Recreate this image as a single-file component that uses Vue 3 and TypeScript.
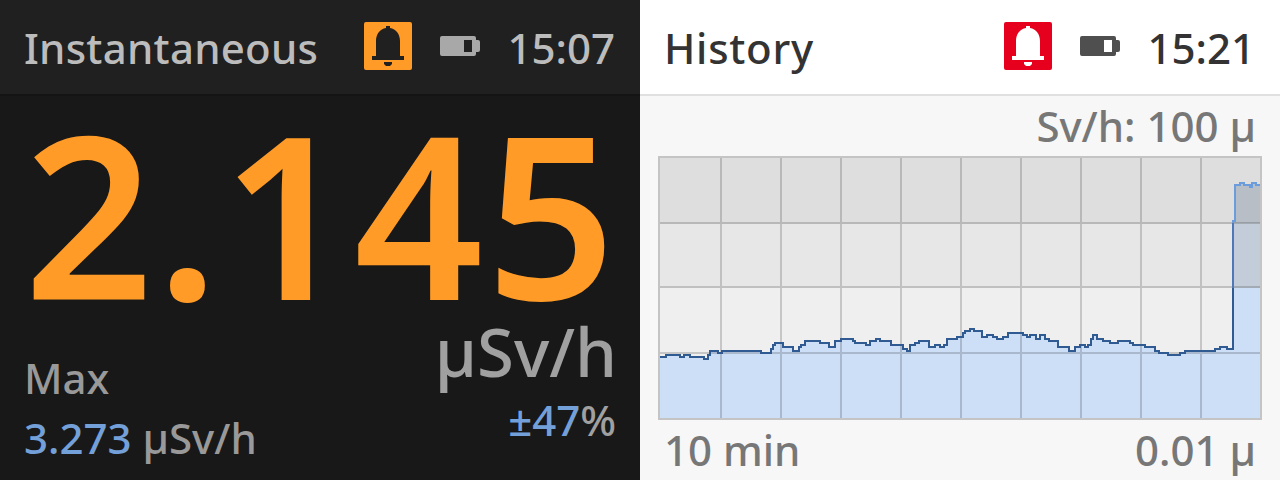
<template>
  <div class="screen">
    <section class="panel dark">
      <header class="bar">
        <span class="title title-long">Instantaneous</span>
        <span class="status">
          <svg class="bell" viewBox="0 0 48 48" width="48" height="48">
            <rect width="48" height="48" rx="2" fill="#ff9b26" />
            <path :d="bellPath" fill="#202020" />
          </svg>
          <svg class="battery" viewBox="0 0 40 20" width="40" height="20">
            <path :d="batteryPath" fill="#a8a8a8" />
            <rect x="24" y="4" width="8" height="12" fill="#202020" />
          </svg>
          <span class="clock">15:07</span>
        </span>
      </header>
      <div class="reading">
        <div class="value">2.145</div>
        <div class="foot">
          <div class="max">
            <div class="max-label">Max</div>
            <div class="max-value"><b>3.273</b> µSv/h</div>
          </div>
          <div class="units">
            <div class="unit">µSv/h</div>
            <div class="conf"><b>±47</b>%</div>
          </div>
        </div>
      </div>
    </section>

    <section class="panel light">
      <header class="bar">
        <span class="title title-short">History</span>
        <span class="status">
          <svg class="bell" viewBox="0 0 48 48" width="48" height="48">
            <rect width="48" height="48" rx="2" fill="#e6001e" />
            <path :d="bellPath" fill="#ffffff" />
          </svg>
          <svg class="battery" viewBox="0 0 40 20" width="40" height="20">
            <path :d="batteryPath" fill="#4f4f4f" />
            <rect x="24" y="4" width="8" height="12" fill="#ffffff" />
          </svg>
          <span class="clock">15:21</span>
        </span>
      </header>
      <div class="history">
        <div class="range">Sv/h: 100 µ</div>
        <svg class="plot" viewBox="658 156 604 264" width="604" height="264" shape-rendering="crispEdges">
          <defs>
            <linearGradient id="fillZones" gradientUnits="userSpaceOnUse" x1="0" y1="158" x2="0" y2="418">
              <stop offset="0.25" stop-color="#b7bec6" />
              <stop offset="0.25" stop-color="#c3cdd9" />
              <stop offset="0.5" stop-color="#c3cdd9" />
              <stop offset="0.5" stop-color="#cddef7" />
            </linearGradient>
            <linearGradient id="lineZones" gradientUnits="userSpaceOnUse" x1="0" y1="158" x2="0" y2="418">
              <stop offset="0.25" stop-color="#6b9cdc" />
              <stop offset="0.25" stop-color="#4f78b8" />
              <stop offset="0.5" stop-color="#4f78b8" />
              <stop offset="0.5" stop-color="#2f5a92" />
            </linearGradient>
          </defs>
          <rect x="658" y="156" width="604" height="264" fill="#c4c4c4" />
          <rect x="660" y="158" width="600" height="66" fill="#dedede" />
          <rect x="660" y="224" width="600" height="64" fill="#e7e7e7" />
          <rect x="660" y="288" width="600" height="130" fill="#efefef" />
          <path :d="fillPath" fill="url(#fillZones)" />
          <path :d="gridPath" fill="#000" fill-opacity="0.17" />
          <path :d="linePath" fill="none" stroke="url(#lineZones)" stroke-width="2" />
        </svg>
        <div class="axis">
          <span>10 min</span>
          <span>0.01 µ</span>
        </div>
      </div>
    </section>
  </div>
</template>

<script setup lang="ts">
const bellPath =
  'M22 4h4v2c6 1 10 6 10 13v15h4v4H8v-4h4V19c0-7 4-12 10-13zM20 40h8v2l-2 2h-4l-2-2z'
const batteryPath = 'M2 0h32a2 2 0 0 1 2 2v2h2a2 2 0 0 1 2 2v8a2 2 0 0 1-2 2h-2v2a2 2 0 0 1-2 2H2a2 2 0 0 1-2-2V2a2 2 0 0 1 2-2z'

const gridX = [720, 780, 840, 900, 960, 1020, 1080, 1140, 1200]
const gridY = [222, 286, 352]
// one path, so the crossings don't get darker
const gridPath =
  gridX.map(x => `M${x} 158h2v260h-2z`).join('') + gridY.map(y => `M660 ${y}h600v2h-600z`).join('')

// [x where the run ends, y of the run], in page pixels
const runs: [number, number][] = [
  [666, 357], [680, 355], [684, 357], [690, 355], [704, 357], [708, 359], [710, 355],
  [718, 351], [722, 353], [761, 351], [771, 353], [773, 349], [775, 345], [783, 343],
  [793, 347], [799, 351], [801, 347], [805, 345], [820, 341], [829, 343], [835, 347],
  [841, 341], [853, 339], [855, 341], [866, 343], [870, 345], [876, 341], [880, 339],
  [891, 341], [903, 345], [907, 349], [910, 351], [915, 345], [919, 343], [929, 341],
  [935, 347], [940, 345], [944, 347], [947, 345], [957, 339], [963, 337], [965, 333],
  [970, 331], [974, 329], [982, 331], [987, 337], [993, 335], [997, 337], [1003, 339],
  [1008, 337], [1023, 333], [1027, 335], [1030, 337], [1036, 335], [1040, 339], [1045, 335],
  [1049, 339], [1058, 341], [1069, 347], [1075, 351], [1080, 347], [1085, 345], [1088, 347],
  [1091, 345], [1093, 339], [1097, 335], [1103, 339], [1110, 341], [1118, 343], [1130, 341],
  [1133, 343], [1145, 345], [1155, 347], [1159, 351], [1168, 353], [1180, 355], [1185, 353],
  [1215, 351], [1220, 349], [1227, 347], [1233, 349], [1235, 221], [1240, 185], [1244, 183],
  [1250, 185], [1252, 187], [1256, 183], [1260, 185]
]

const linePath = 'M660 357' + runs.map(([x, y]) => `V${y}H${x}`).join('')
const fillPath = linePath + 'V418H660Z'
</script>

<style scoped>
.screen {
  display: flex;
  width: 1280px;
  height: 480px;
  overflow: hidden;
  font-family: "Noto Sans", sans-serif;
  font-weight: 500;
}

.panel {
  width: 640px;
  height: 480px;
  display: flex;
  flex-direction: column;
}

.bar {
  height: 94px;
  flex: none;
  display: flex;
  align-items: center;
  justify-content: space-between;
  padding: 0 25px 0 24px;
  font-size: 42px;
}

.title-long {
  letter-spacing: 0.25px;
}

.title-short {
  letter-spacing: 0.7px;
}

.status {
  display: flex;
  align-items: center;
}

.bell {
  display: block;
  margin-bottom: 2px;
}

.battery {
  display: block;
  margin-left: 28px;
  margin-bottom: 2px;
}

.clock {
  margin-left: 27px;
}

.dark {
  background: #181818;
}

.dark .bar {
  background: #202020;
  color: #bcbcbc;
  border-bottom: 2px solid #141414;
}

.light {
  background: #f7f7f7;
}

.light .bar {
  background: #ffffff;
  color: #333333;
  border-bottom: 2px solid #e0e0e0;
}

.reading {
  flex: 1;
  padding: 0 24px;
}

.value {
  font-size: 226px;
  font-weight: 600;
  letter-spacing: 3px;
  line-height: 200px;
  height: 200px;
  margin-top: 16px;
  color: #ff9b26;
  white-space: nowrap;
}

.foot {
  display: flex;
  justify-content: space-between;
  align-items: flex-end;
}

.max {
  color: #999999;
  font-size: 42px;
  line-height: 60px;
  margin-top: 36px;
}

.max-value b,
.conf b {
  font-weight: 500;
  color: #74a0da;
}

.units {
  text-align: right;
  color: #a0a0a0;
}

.unit {
  font-size: 67px;
  line-height: 76px;
  margin-right: -1px;
  margin-bottom: 6px;
}

.conf {
  font-size: 42px;
  line-height: 50px;
  margin-bottom: 23px;
}

.history {
  flex: 1;
  display: flex;
  flex-direction: column;
  align-items: stretch;
  color: #777777;
  font-size: 42px;
}

.range {
  height: 60px;
  line-height: 60px;
  text-align: right;
  padding-right: 24px;
}

.plot {
  display: block;
  margin-left: 18px;
}

.axis {
  display: flex;
  justify-content: space-between;
  padding: 0 24px;
  line-height: 60px;
}
</style>
